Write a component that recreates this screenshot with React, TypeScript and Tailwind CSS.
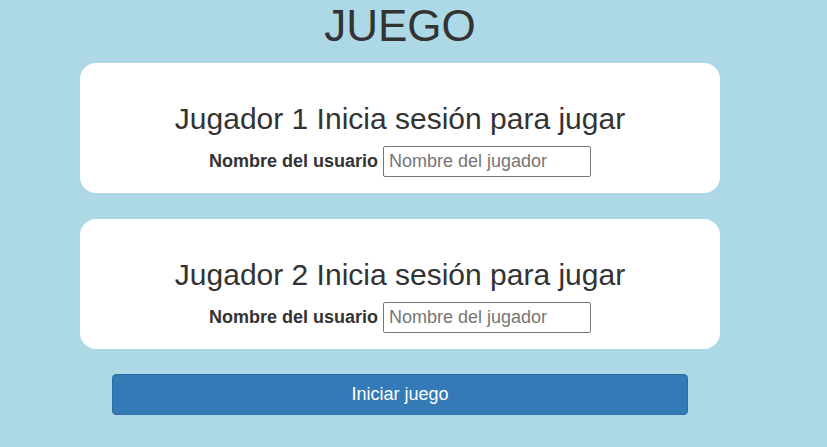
import React from "react";

function Card({ n }: { n: number }) {
  return (
    <div className="mx-[80px] rounded-[16px] bg-white pt-[39px] pb-[16px] text-center">
      <h2 className="m-0 text-[30px] font-normal leading-[34px] text-[#333]">
        Jugador {n} Inicia sesión para jugar
      </h2>
      <div className="mt-[10px] flex items-center justify-center gap-[5px]">
        <label className="text-[18px] font-bold text-[#333]">Nombre del usuario</label>
        <input
          type="text"
          placeholder="Nombre del jugador"
          className="h-[31px] w-[208px] rounded-[2px] border border-[#767676] bg-white px-[5px] text-[18px] text-[#333] placeholder:text-[#757575] outline-none"
        />
      </div>
    </div>
  );
}

export default function App() {
  return (
    <div
      className="min-h-[447px] w-full bg-[#add8e6]"
      style={{ fontFamily: '"Liberation Sans", Arial, sans-serif' }}
    >
      <div className="w-[800px]">
        <h1 className="m-0 text-center text-[44px] font-normal leading-[51px] text-[#333]">JUEGO</h1>
        <div className="mt-[12px] flex flex-col gap-[26px]">
          <Card n={1} />
          <Card n={2} />
        </div>
        <div className="mx-[112px] mt-[25px]">
          <button className="h-[41px] w-full rounded-[4px] border border-[#2e6da4] bg-[#337ab7] text-[18px] text-white">
            Iniciar juego
          </button>
        </div>
      </div>
    </div>
  );
}
